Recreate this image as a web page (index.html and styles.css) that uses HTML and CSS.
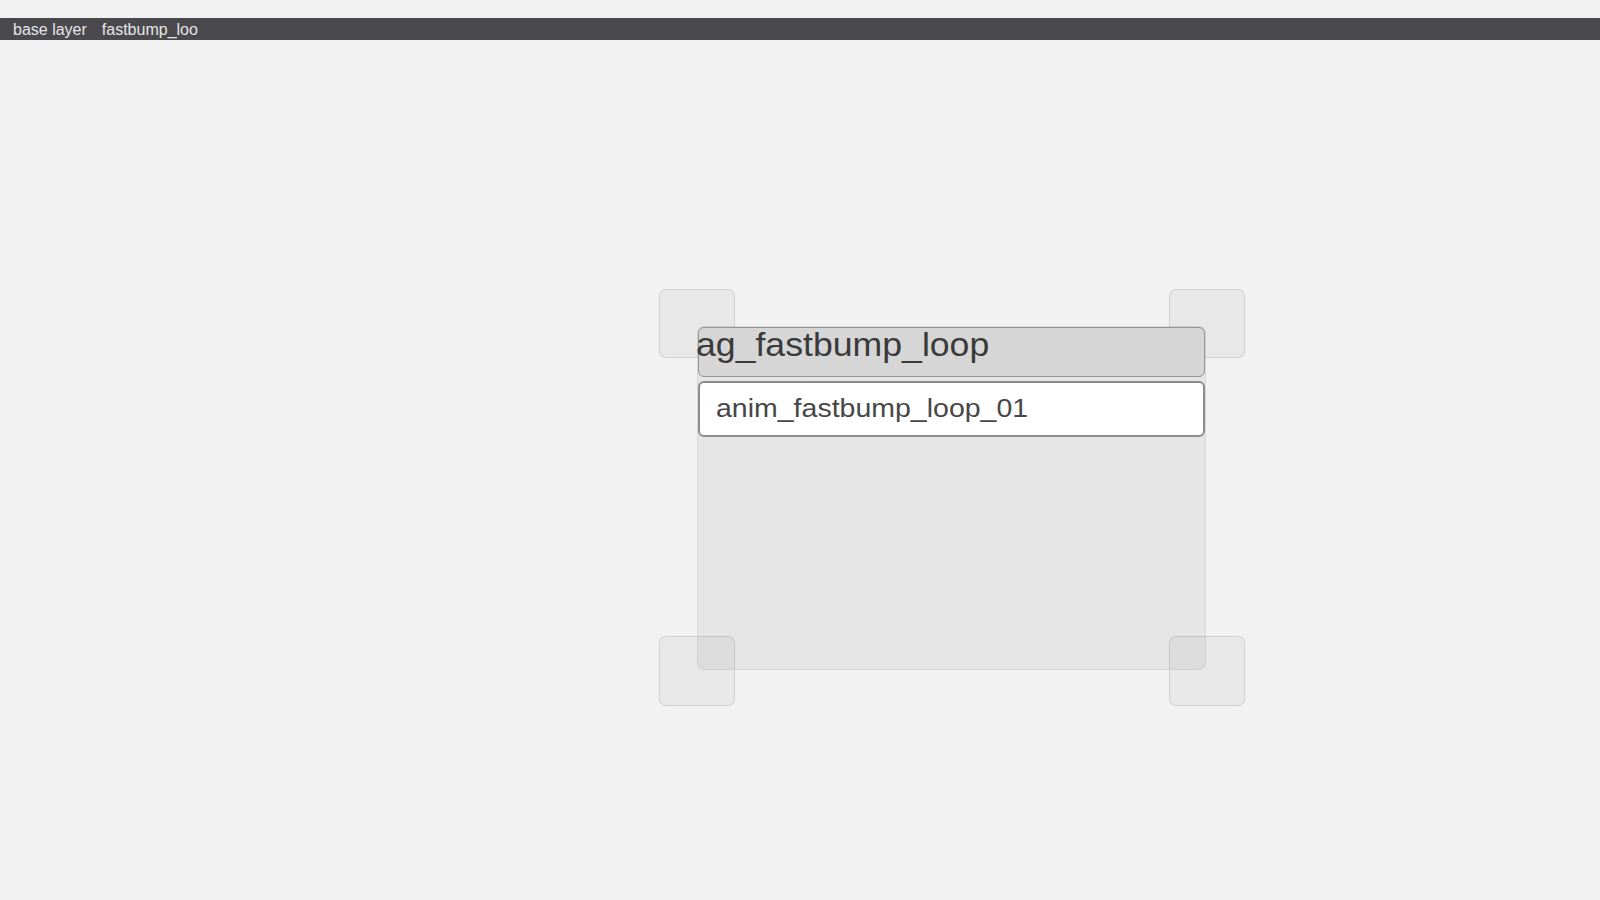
FILE: index.html
```html
<!DOCTYPE html>
<html>
<head>
<meta charset="utf-8">
<link rel="stylesheet" href="styles.css">
</head>
<body>
<div class="top-gap"></div>
<div class="breadcrumb">
  <span class="crumb">base layer</span>
  <span class="crumb">fastbump_loo</span>
</div>
<div class="canvas">
  <div class="handle h-tl"></div>
  <div class="handle h-tr"></div>
  <div class="node">
    <div class="node-header"><span class="node-title">ag_fastbump_loop</span></div>
    <div class="node-item"><span class="item-label">anim_fastbump_loop_01</span></div>
    <div class="node-fill"></div>
  </div>
  <div class="handle h-bl"></div>
  <div class="handle h-br"></div>
</div>
</body>
</html>
```

FILE: styles.css
```css
html, body {
  margin: 0;
  padding: 0;
  background: #f2f2f2;
  font-family: "Liberation Sans", Arial, sans-serif;
  width: 1600px;
  height: 900px;
  overflow: hidden;
}

.top-gap {
  height: 18px;
}

.breadcrumb {
  height: 22px;
  background: #4a494e;
  display: flex;
  align-items: flex-start;
  gap: 15px;
  padding-left: 13px;
}

.crumb {
  color: #e6e6e6;
  font-size: 16px;
  line-height: 24px;
}

.canvas {
  position: relative;
  height: 860px;
}

.handle {
  position: absolute;
  width: 76px;
  height: 69px;
  box-sizing: border-box;
  border: 1.5px solid rgba(0, 0, 0, 0.1);
  background: rgba(0, 0, 0, 0.04);
  border-radius: 7px;
}

.h-tl { left: 659px; top: 249px; }
.h-tr { left: 1169px; top: 249px; }
.h-bl { left: 659px; top: 596px; height: 70px; }
.h-br { left: 1169px; top: 596px; height: 70px; }

.node {
  position: absolute;
  left: 698px;
  top: 287px;
  width: 507px;
  height: 342px;
  display: flex;
  flex-direction: column;
  gap: 4px;
  border-radius: 6px;
  background: rgba(0, 0, 0, 0.05);
  box-shadow: 0 0 0 1px rgba(0, 0, 0, 0.1);
}

.node-header {
  height: 50px;
  box-sizing: border-box;
  background: #d6d6d6;
  border: 1.5px solid #959595;
  border-radius: 6px;
  overflow: visible;
  white-space: nowrap;
}

.node-title {
  display: inline-block;
  font-size: 33px;
  line-height: 33px;
  color: #3a3a3a;
  margin-left: -3px;
  transform: scaleX(1.08);
  transform-origin: left center;
}

.node-item {
  height: 56px;
  box-sizing: border-box;
  background: #ffffff;
  border: 2px solid #8c8c8c;
  border-radius: 6px;
  padding-left: 16px;
  white-space: nowrap;
}

.item-label {
  display: inline-block;
  font-size: 25px;
  line-height: 51px;
  color: #474747;
  transform: scaleX(1.14);
  transform-origin: left center;
}

.node-fill {
  flex: 1;
}
```
